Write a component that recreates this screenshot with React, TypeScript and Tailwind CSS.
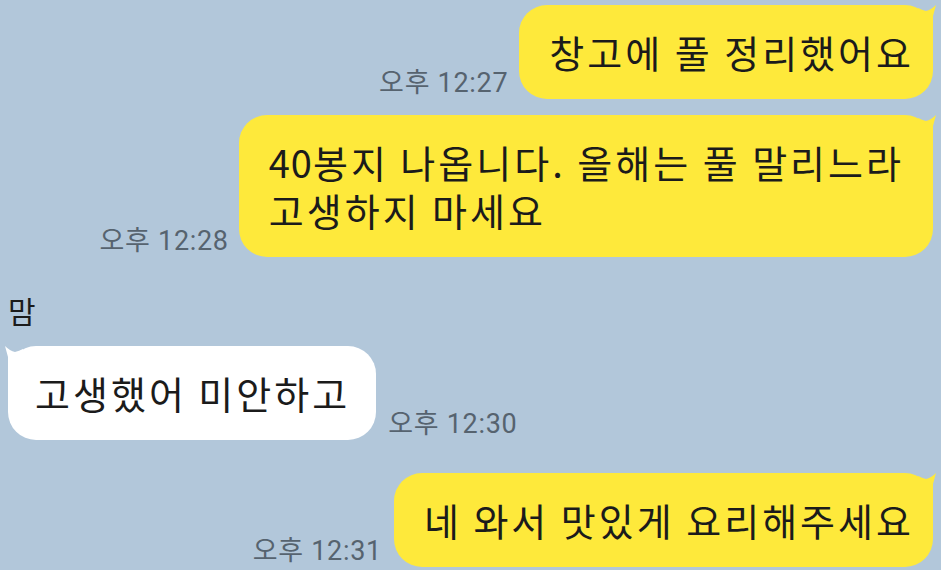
import React from "react";

const YELLOW = "#fee93b";

function TailRight({ color }: { color: string }) {
  return (
    <svg
      className="absolute top-[-1px] right-[-5px]"
      width="20"
      height="30"
      viewBox="0 0 20 30"
    >
      <path d="M0 4 Q4 6 8 7 Q13 6 18 1 L15 12 L15 30 L0 30 Z" fill={color} />
    </svg>
  );
}

function TailLeft({ color }: { color: string }) {
  return (
    <svg
      className="absolute top-[-1px] left-[-5px]"
      width="20"
      height="30"
      viewBox="0 0 20 30"
    >
      <path d="M20 4 Q16 6 12 7 Q7 6 2 1 L5 12 L5 30 L20 30 Z" fill={color} />
    </svg>
  );
}

function Time({ t }: { t: string }) {
  return (
    <div
      className="text-[27px] leading-[30px] tracking-[0.7px] text-[#56636f] whitespace-nowrap mb-[1px]"
      style={{ fontFamily: 'Roboto, "Noto Sans CJK KR", sans-serif' }}
    >
      {t}
    </div>
  );
}

export default function App() {
  return (
    <div
      className="w-[941px] h-[570px] bg-[#b2c7da] overflow-hidden flex flex-col"
      style={{ fontFamily: '"Noto Sans CJK KR", "Noto Sans", sans-serif' }}
    >
      <div className="flex justify-end items-end gap-[11px] pt-[5px] pr-[8px]">
        <Time t="오후 12:27" />
        <div className="relative bg-[#fee93b] rounded-[28px] pl-[30px] pr-[19px] py-[23px] text-[38px] leading-[48px] tracking-[3px] text-[#1b1b1b] whitespace-nowrap">
          창고에 풀 정리했어요
          <TailRight color={YELLOW} />
        </div>
      </div>
      <div className="flex justify-end items-end gap-[10px] mt-[16px] pr-[8px]">
        <Time t="오후 12:28" />
        <div className="relative bg-[#fee93b] rounded-[28px] pl-[30px] pr-[29px] py-[23px] text-[38px] leading-[48px] tracking-[3px] text-[#1b1b1b] whitespace-nowrap">
          <span className="tracking-[1px]">40</span>봉지 나옵니다. 올해는 풀 말리느라
          <br />
          고생하지 마세요
          <TailRight color={YELLOW} />
        </div>
      </div>
      <div className="pl-[8px] mt-[35px] text-[30px] leading-[36px] text-[#1b1b1b]">맘</div>
      <div className="flex items-end gap-[12px] mt-[18px] pl-[8px]">
        <div className="relative bg-white rounded-[28px] pl-[27px] pr-[26px] py-[23px] text-[38px] leading-[48px] tracking-[3px] text-[#1b1b1b] whitespace-nowrap">
          고생했어 미안하고
          <TailLeft color="#ffffff" />
        </div>
        <Time t="오후 12:30" />
      </div>
      <div className="flex justify-end items-end gap-[12px] mt-[33px] pr-[8px]">
        <Time t="오후 12:31" />
        <div className="relative bg-[#fee93b] rounded-[28px] pl-[30px] pr-[19px] py-[23px] text-[38px] leading-[48px] tracking-[3px] text-[#1b1b1b] whitespace-nowrap">
          네 와서 맛있게 요리해주세요
          <TailRight color={YELLOW} />
        </div>
      </div>
    </div>
  );
}
